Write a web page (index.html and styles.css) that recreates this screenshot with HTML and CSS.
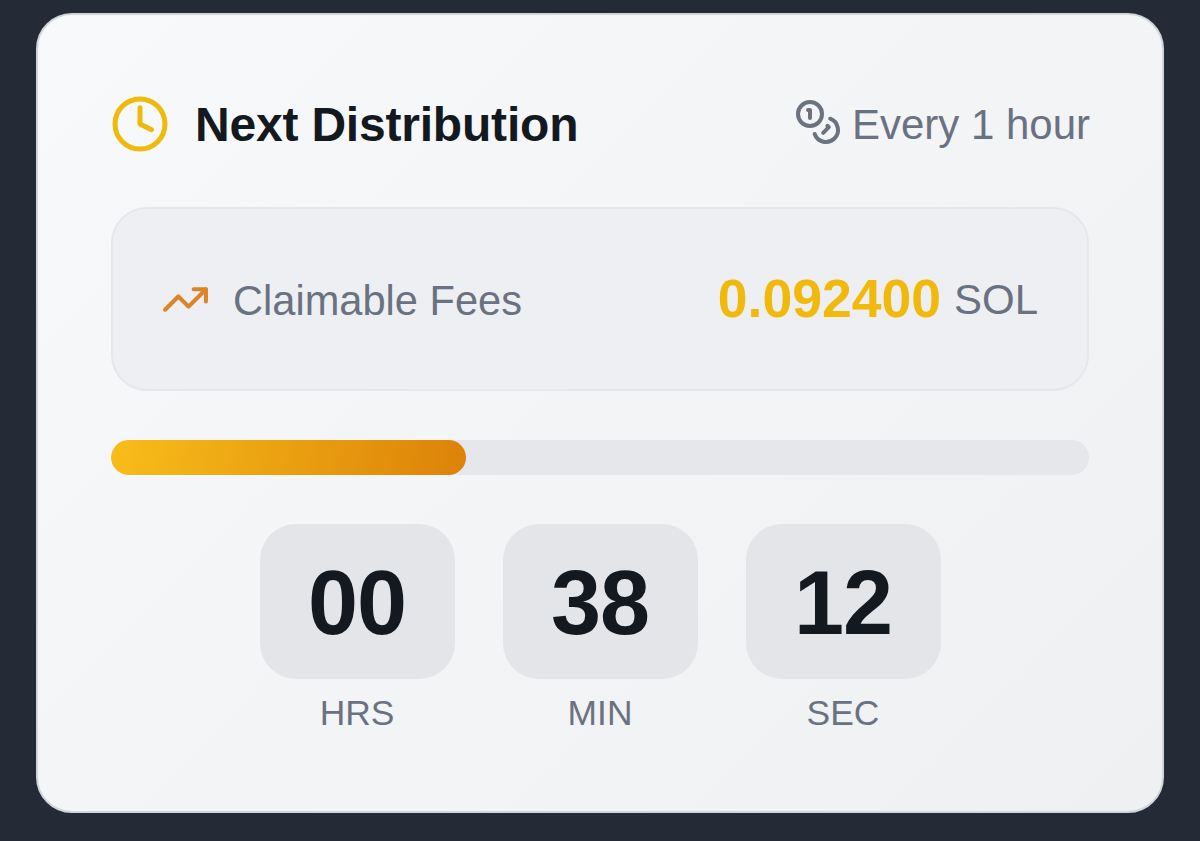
FILE: index.html
```html
<!DOCTYPE html>
<html lang="en">
<head>
    <meta charset="UTF-8">
    <title>Next Distribution</title>
    <link rel="stylesheet" href="styles.css">
</head>
<body>
    <div class="card">
        <div class="card-header">
            <div class="title-group">
                <svg class="clock-icon" viewBox="0 0 24 24" fill="none" stroke="#f0b90b" stroke-width="2" stroke-linecap="round" stroke-linejoin="round">
                    <circle cx="12" cy="12" r="10"/>
                    <path d="M12 5.5V12l4.6 2.3"/>
                </svg>
                <h1>Next Distribution</h1>
            </div>
            <div class="interval">
                <svg class="coins-icon" viewBox="0 0 24 24" fill="none" stroke="#6b7280" stroke-width="2" stroke-linecap="round" stroke-linejoin="round">
                    <circle cx="8" cy="8" r="6"/>
                    <path d="M18.09 10.37A6 6 0 1 1 10.34 18"/>
                    <path d="M7 6h1v4"/>
                    <path d="m16.71 13.88.7.71-2.82 2.82"/>
                </svg>
                <span>Every 1 hour</span>
            </div>
        </div>

        <div class="fees-box">
            <div class="fees-label">
                <svg class="trend-icon" viewBox="0 0 24 24" fill="none" stroke="#dc8428" stroke-width="2" stroke-linecap="round" stroke-linejoin="round">
                    <path d="M22 7l-8.5 8.5-5-5L2 17"/>
                    <path d="M16 7h6v6"/>
                </svg>
                <span>Claimable Fees</span>
            </div>
            <div class="fees-value">
                <span class="amount">0.092400</span>
                <span class="unit">SOL</span>
            </div>
        </div>

        <div class="progress-bar">
            <div class="progress-bar-fill" style="width: 36.3%"></div>
        </div>

        <div class="countdown">
            <div class="time-unit">
                <div class="time-box">00</div>
                <div class="time-label">HRS</div>
            </div>
            <div class="time-unit">
                <div class="time-box">38</div>
                <div class="time-label">MIN</div>
            </div>
            <div class="time-unit">
                <div class="time-box">12</div>
                <div class="time-label">SEC</div>
            </div>
        </div>
    </div>
</body>
</html>
```

FILE: styles.css
```css
* {
    margin: 0;
    padding: 0;
    box-sizing: border-box;
}

html, body {
    height: 100%;
}

body {
    font-family: "Liberation Sans", Arial, sans-serif;
    background: #252a37;
    color: #6a7282;
    padding: 13px 36px 28px;
    overflow: hidden;
}

.card {
    height: 800px;
    background: linear-gradient(135deg, #f8f9fb, #eff0f2);
    border: 2px solid #d1d5db;
    border-radius: 36px;
    padding: 72px 73px 0;
}

.card-header {
    display: flex;
    justify-content: space-between;
    align-items: center;
    height: 74px;
    margin-bottom: 46px;
}

.title-group {
    display: flex;
    align-items: center;
    gap: 25px;
    margin-left: -1px;
}

.clock-icon {
    width: 60px;
    height: 60px;
}

h1 {
    font-size: 48px;
    font-weight: 700;
    letter-spacing: -0.2px;
    color: #14191f;
}

.interval {
    display: flex;
    align-items: center;
    gap: 10px;
    font-size: 42px;
    margin: 2px -1px 0 0;
}

.coins-icon {
    width: 48px;
    height: 48px;
    margin-bottom: 6px;
}

.fees-box {
    display: flex;
    justify-content: space-between;
    align-items: center;
    height: 184px;
    padding: 0 49px 0 48px;
    background: #eeeff2;
    border: 2px solid #e5e7eb;
    border-radius: 36px;
    margin-bottom: 49px;
}

.fees-label {
    display: flex;
    align-items: center;
    gap: 23px;
    font-size: 41.6px;
}

.fees-label span {
    padding-top: 3px;
}

.trend-icon {
    width: 49px;
    height: 49px;
}

.fees-value {
    display: flex;
    align-items: center;
    gap: 13px;
    font-size: 42px;
}

.amount {
    font-size: 53.5px;
    font-weight: 700;
    color: #f0b90b;
    margin-bottom: 1px;
}

.unit {
    padding-top: 2px;
}

.progress-bar {
    height: 35px;
    background: #e5e7eb;
    border-radius: 18px;
    overflow: hidden;
    margin-bottom: 49px;
}

.progress-bar-fill {
    height: 100%;
    background: linear-gradient(100deg, #f8bd1a, #dc8208);
    border-radius: 18px;
}

.countdown {
    display: flex;
    justify-content: center;
    gap: 48px;
}

.time-unit {
    display: flex;
    flex-direction: column;
    align-items: center;
    gap: 14px;
}

.time-box {
    display: flex;
    align-items: center;
    justify-content: center;
    width: 195px;
    height: 155px;
    padding-top: 4px;
    background: #e4e5e9;
    border-radius: 36px;
    font-size: 90px;
    font-weight: 700;
    letter-spacing: -1px;
    color: #14191f;
}

.time-label {
    font-size: 35.4px;
}
```
